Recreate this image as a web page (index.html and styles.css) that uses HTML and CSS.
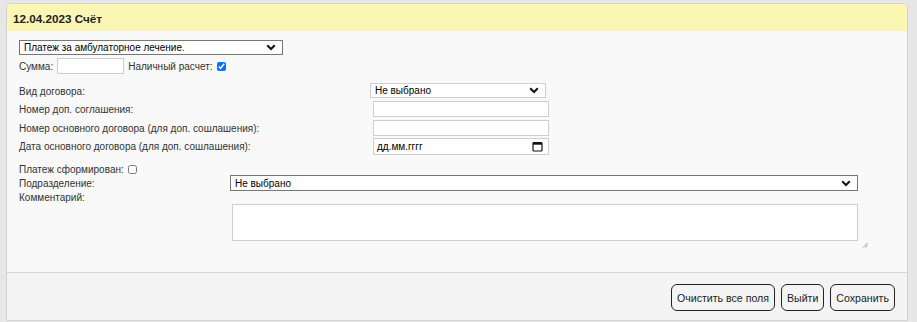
FILE: index.html
```html
<!DOCTYPE html>
<html lang="ru">
<head>
<meta charset="utf-8">
<title>Счёт</title>
<link rel="stylesheet" href="styles.css">
</head>
<body>
<div class="panel">
  <div class="panel-head">12.04.2023 Счёт</div>
  <div class="panel-body">
    <div class="sel sel-dark sel-type">
      <span>Платеж за амбулаторное лечение.</span>
      <svg class="chev" width="10" height="7" viewBox="0 0 10 7"><path d="M1.2 1.3 L5 5 L8.8 1.3" fill="none" stroke="#111" stroke-width="2"/></svg>
    </div>
    <div class="row-sum">
      <label class="lbl">Сумма:</label>
      <input class="inp inp-sum" type="text">
      <label class="lbl lbl-cash">Наличный расчет:</label>
      <input class="chk" type="checkbox" checked>
    </div>
    <div class="fields">
      <label class="lbl">Вид договора:</label>
      <div class="sel sel-light sel-contract">
        <span>Не выбрано</span>
        <svg class="chev" width="10" height="7" viewBox="0 0 10 7"><path d="M1.2 1.3 L5 5 L8.8 1.3" fill="none" stroke="#111" stroke-width="2"/></svg>
      </div>
      <label class="lbl">Номер доп. соглашения:</label>
      <input class="inp inp-field" type="text">
      <label class="lbl">Номер основного договора (для доп. сошлашения):</label>
      <input class="inp inp-field" type="text">
      <label class="lbl">Дата основного договора (для доп. сошлашения):</label>
      <div class="inp inp-field inp-date">
        <span>дд.мм.гггг</span>
        <svg width="11" height="11" viewBox="0 0 11 11"><rect x="1" y="1.5" width="9" height="8.5" rx="1" fill="none" stroke="#111" stroke-width="1.2"/><rect x="1" y="1.5" width="9" height="2.2" fill="#111"/></svg>
      </div>
    </div>
    <div class="row-paid">
      <label class="lbl">Платеж сформирован:</label>
      <input class="chk chk-empty" type="checkbox">
    </div>
    <div class="row-dept">
      <label class="lbl lbl-dept">Подразделение:</label>
      <div class="sel sel-dark sel-dept">
        <span>Не выбрано</span>
        <svg class="chev" width="10" height="7" viewBox="0 0 10 7"><path d="M1.2 1.3 L5 5 L8.8 1.3" fill="none" stroke="#111" stroke-width="2"/></svg>
      </div>
    </div>
    <div class="lbl lbl-comment">Комментарий:</div>
    <div class="row-comment">
      <textarea class="txt"></textarea>
      <svg class="grip" width="6" height="6" viewBox="0 0 6 6"><path d="M5.5 1 L1 5.5 M5.5 3.5 L3.5 5.5" stroke="#8a8a8a" stroke-width="0.9"/></svg>
    </div>
  </div>
  <div class="panel-foot">
    <button class="btn" type="button">Очистить все поля</button>
    <button class="btn" type="button">Выйти</button>
    <button class="btn" type="button">Сохранить</button>
  </div>
</div>
</body>
</html>
```

FILE: styles.css
```css
* { box-sizing: border-box; }

html, body {
  margin: 0;
  padding: 0;
  background: #e6e7e6;
  font-family: "Liberation Sans", Arial, sans-serif;
  font-size: 10px;
  color: #333;
}

.panel {
  margin: 3px 0 0 6px;
  width: 902px;
  border: 1px solid #d2d2d2;
  border-radius: 4px 4px 0 0;
  overflow: hidden;
  background: #f9f9f9;
}

.panel-head {
  height: 27px;
  background: #fcf6b4;
  padding: 1px 0 0 6px;
  display: flex;
  align-items: center;
  font-weight: bold;
  color: #222;
  font-size: 11.7px;
}

.panel-body {
  height: 241px;
  padding: 9px 0 0 12px;
}

.lbl {
  line-height: 13px;
  color: #333;
  white-space: nowrap;
  font-size: 10px;
}

.sel {
  display: flex;
  align-items: center;
  justify-content: space-between;
  background: #fff;
  color: #000;
  padding: 0 6px 0 4px;
  font-size: 10px;
}

.sel-dark { border: 1px solid #767676; }
.sel-light { border: 1px solid #cfcfcf; }

.chev { display: block; }

.sel-type {
  width: 264px;
  height: 15px;
}

.row-sum {
  margin-top: 3px;
  height: 16px;
  display: flex;
  align-items: center;
}

.inp {
  border: 1px solid #cfcfcf;
  background: #fff;
  margin: 0;
  padding: 0 3px;
  font: inherit;
  color: #000;
}

.inp-sum {
  width: 67px;
  height: 16px;
  margin-left: 4px;
}

.lbl-cash { margin-left: 4px; }

.chk {
  width: 9px;
  height: 9px;
  margin: 1px 0 0 4px;
  accent-color: #0075ff;
}

.fields {
  margin-top: 9px;
  display: grid;
  grid-template-columns: 351px 180px;
  grid-template-rows: 18px 19px 18px 17px;
  align-items: start;
}

.fields > .lbl { padding-top: 2px; }

.sel-contract {
  width: 176px;
  height: 15px;
}

.inp-field {
  width: 176px;
  height: 16px;
  margin-left: 3px;
}

.inp-date {
  height: 17px;
  display: flex;
  align-items: center;
  justify-content: space-between;
  padding: 0 5px 0 3px;
  color: #000;
}

.inp-date svg { display: block; }

.row-paid {
  margin-top: 8px;
  height: 12px;
  display: flex;
  align-items: center;
}

.chk-empty { margin-left: 4px; }

.row-dept {
  height: 16px;
  display: flex;
  align-items: center;
}

.lbl-dept { width: 211px; }

.sel-dept {
  width: 628px;
  height: 16px;
}

.lbl-comment {
  height: 13px;
}

.row-comment {
  display: flex;
  align-items: flex-end;
  margin-left: 213px;
}

.txt {
  display: block;
  width: 626px;
  height: 37px;
  margin: 0;
  border: 1px solid #cfcfcf;
  background: #fff;
  resize: none;
  font: inherit;
}

.grip {
  display: block;
  margin: 0 0 -7px 4px;
}

.panel-foot {
  border-top: 1px solid #d6d6d6;
  background: #f4f4f4;
  height: 48px;
  padding: 11px 12px 0 0;
  display: flex;
  justify-content: flex-end;
  align-items: flex-start;
  gap: 6px;
}

.btn {
  height: 27px;
  padding: 0 5px;
  margin: 0;
  border: 1px solid #222;
  border-radius: 6px;
  background: #f4f4f4;
  font-family: "Liberation Sans", Arial, sans-serif;
  font-size: 10.6px;
  color: #222;
}
```
